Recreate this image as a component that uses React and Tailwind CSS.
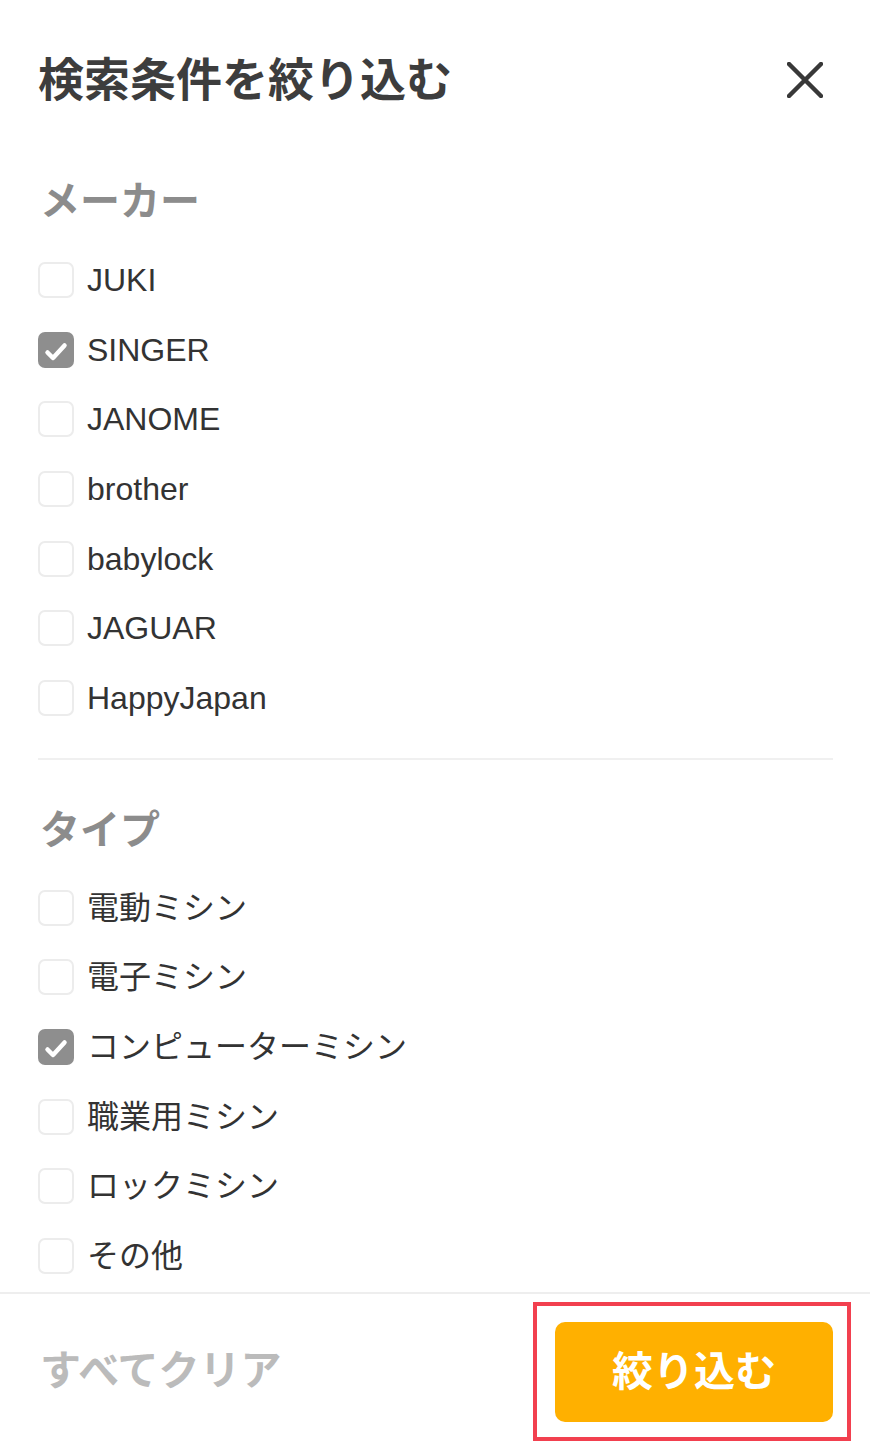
const makers = [
  { name: 'JUKI', checked: false },
  { name: 'SINGER', checked: true },
  { name: 'JANOME', checked: false },
  { name: 'brother', checked: false },
  { name: 'babylock', checked: false },
  { name: 'JAGUAR', checked: false },
  { name: 'HappyJapan', checked: false },
];

const types = [
  { name: '電動ミシン', checked: false },
  { name: '電子ミシン', checked: false },
  { name: 'コンピューターミシン', checked: true },
  { name: '職業用ミシン', checked: false },
  { name: 'ロックミシン', checked: false },
  { name: 'その他', checked: false },
];

const font = "font-['Liberation_Sans','Noto_Sans_CJK_JP',sans-serif]";

function Checkbox({ checked }) {
  if (checked) {
    return (
      <div className="w-[36px] h-[36px] rounded-[7px] bg-[#8e8e8e] shrink-0">
        <svg className="w-[36px] h-[36px]" viewBox="0 0 36 36" fill="none" stroke="#fff" strokeWidth={4.5} strokeLinecap="round" strokeLinejoin="round">
          <path d="M9.5 20.5l5.5 5.5 11.5-12.5" />
        </svg>
      </div>
    );
  }
  return <div className="w-[36px] h-[36px] rounded-[7px] border-[2.5px] border-[#ececec] bg-white shrink-0" />;
}

function OptionRow({ item }) {
  return (
    <label className="flex items-center gap-[13px] h-[69.7px]">
      <Checkbox checked={item.checked} />
      <span className="text-[32px] leading-none text-[#333333]">{item.name}</span>
    </label>
  );
}

export default function App() {
  return (
    <div className={`w-[870px] h-[1450px] bg-white flex flex-col overflow-hidden ${font}`}>

      {/* Header */}
      <div className="flex items-center justify-between h-[80px] mt-[40px] pl-[38px] pr-[47px]">
        <h1 className="text-[46px] leading-none font-bold text-[#3d3d3d]">検索条件を絞り込む</h1>
        <svg className="w-[36px] h-[36px]" viewBox="0 0 36 36" fill="none" stroke="#383838" strokeWidth={4.5} strokeLinecap="round">
          <path d="M2 2L34 34M34 2L2 34" />
        </svg>
      </div>

      {/* Filter sections */}
      <div className="flex-1 px-[38px]">
        <h2 className="mt-[57px] h-[48px] flex items-center text-[40px] font-bold text-[#8c8c8c] pl-[2px]">メーカー</h2>
        <div className="mt-[20px] flex flex-col">
          {makers.map((m) => <OptionRow key={m.name} item={m} />)}
        </div>

        <div className="mt-[25px] h-[2px] bg-[#f0f0f0] mr-[-1px]" />

        <h2 className="mt-[46px] h-[48px] flex items-center text-[40px] font-bold text-[#8c8c8c] pl-[2px]">タイプ</h2>
        <div className="mt-[19px] flex flex-col">
          {types.map((t) => <OptionRow key={t.name} item={t} />)}
        </div>
      </div>

      {/* Footer */}
      <div className="h-[158px] border-t-2 border-[#eeeeee] flex items-center justify-between pl-[40px] pr-[19px] pt-[8px] pb-[9px]">
        <button className="text-[41px] font-bold text-[#bbbbbb] leading-none">すべてクリア</button>
        <div className="border-4 border-[#f2404f] pl-[18px] pr-[14px] pt-[16px] pb-[15px]">
          <button className="w-[278px] h-[100px] rounded-[10px] bg-[#ffb000] text-white text-[41px] font-bold leading-none">
            絞り込む
          </button>
        </div>
      </div>
    </div>
  );
}
